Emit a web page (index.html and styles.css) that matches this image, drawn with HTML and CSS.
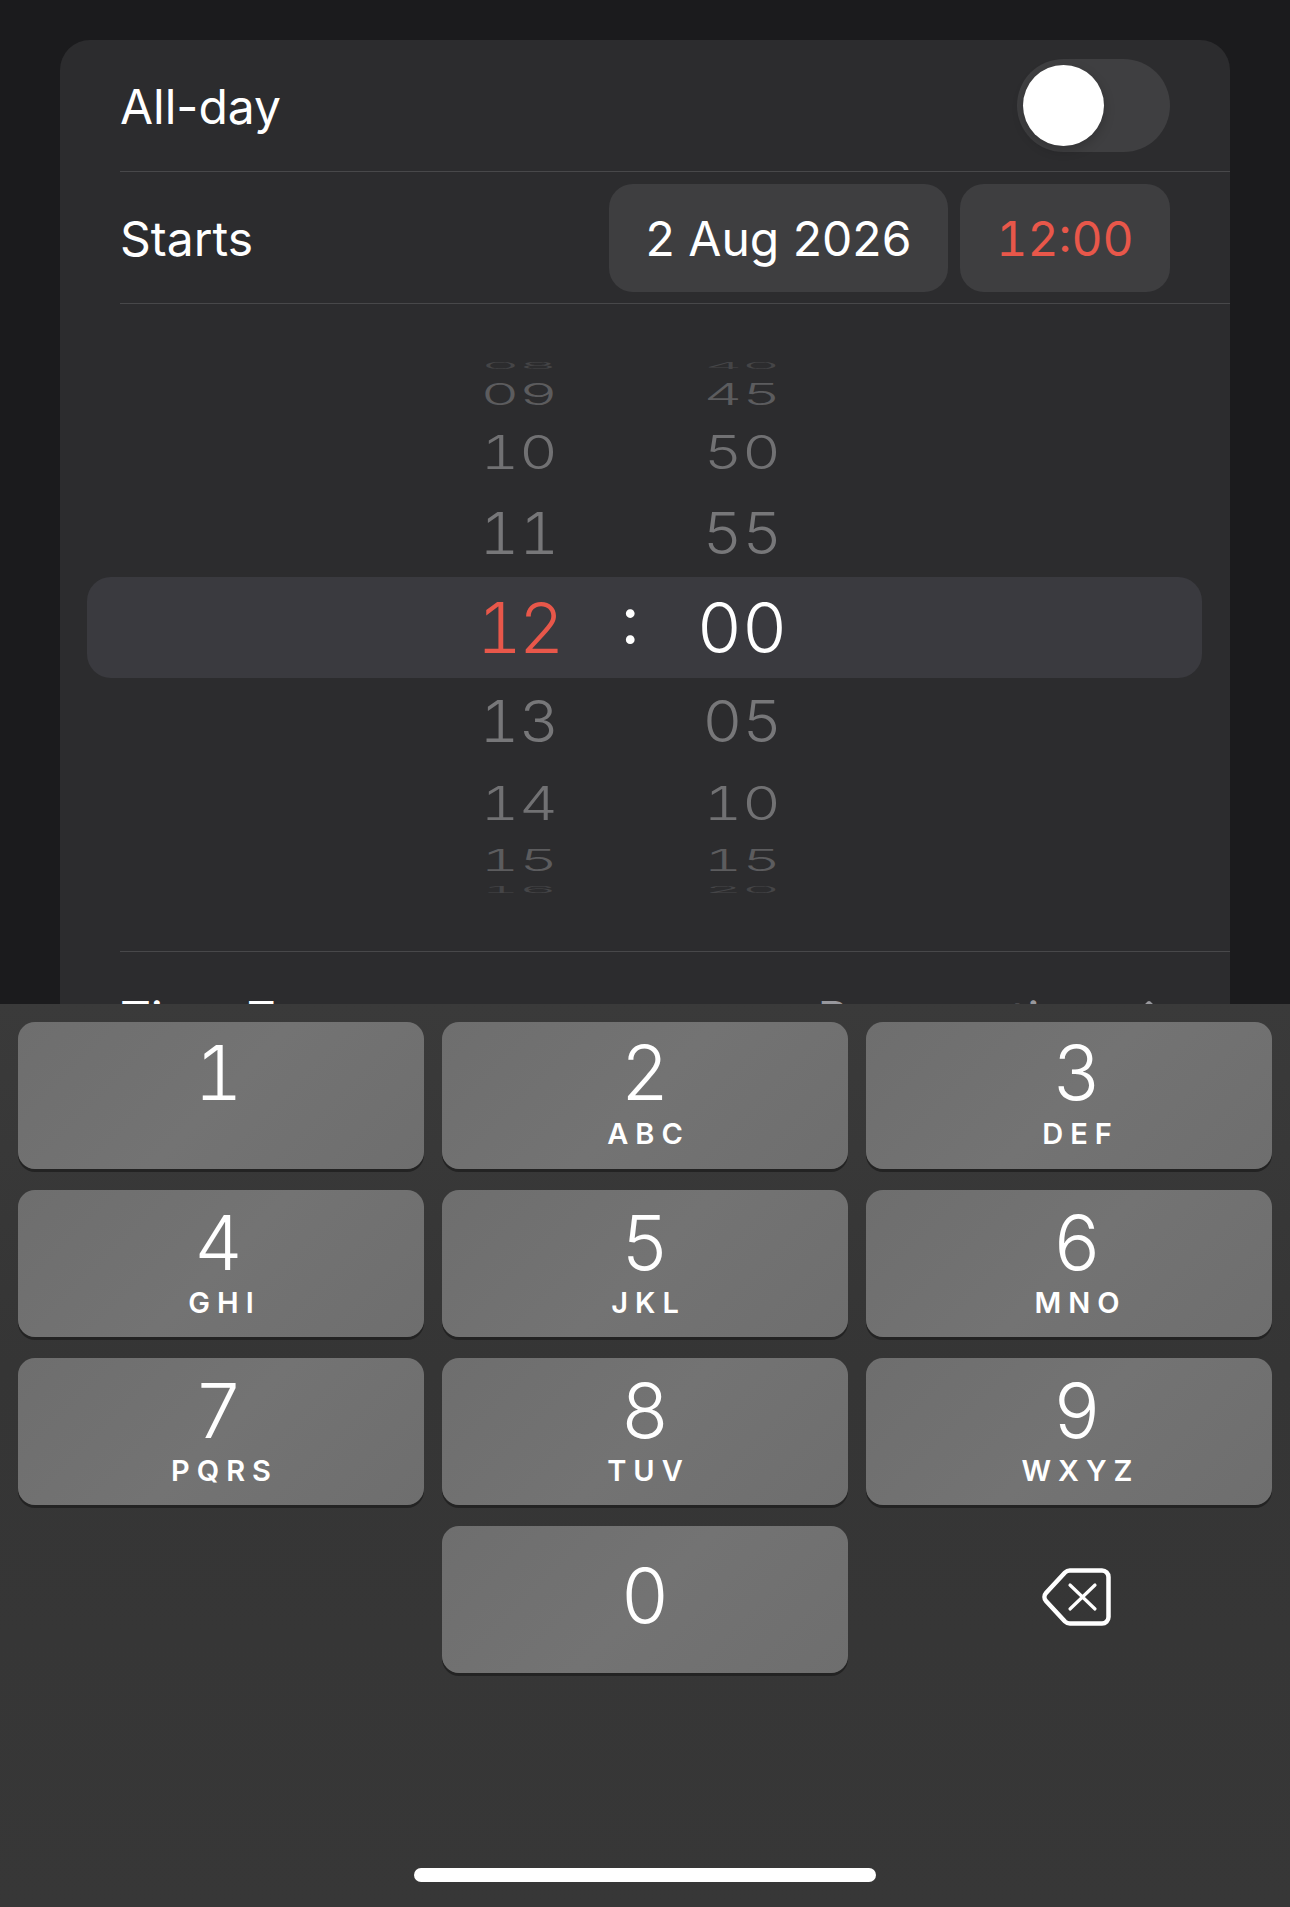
FILE: index.html
```html
<!DOCTYPE html>
<html lang="en">
<head>
    <meta charset="UTF-8" />
    <meta name="viewport" content="width=device-width, initial-scale=1.0" />
    <title>New Event</title>
    <link rel="stylesheet" href="styles.css">
</head>
<body>
    <div class="screen">
        <div class="card">
            <div class="row">
                <span>All-day</span>
                <div class="toggle"><div class="knob"></div></div>
            </div>
            <div class="row">
                <span>Starts</span>
                <div class="pills">
                    <div class="pill date">2 Aug 2026</div>
                    <div class="pill time">12:00</div>
                </div>
            </div>

            <div class="picker">
                <div class="band"></div>
                <div class="wheel">
                    <div class="column">
                        <div class="cell d4"><span>08</span></div>
                        <div class="cell d3"><span>09</span></div>
                        <div class="cell d2"><span>10</span></div>
                        <div class="cell d1"><span>11</span></div>
                        <div class="cell d0 red"><span>12</span></div>
                        <div class="cell d1"><span>13</span></div>
                        <div class="cell d2"><span>14</span></div>
                        <div class="cell d3"><span>15</span></div>
                        <div class="cell d4"><span>16</span></div>
                    </div>
                    <div class="colon">:</div>
                    <div class="column">
                        <div class="cell d4"><span>40</span></div>
                        <div class="cell d3"><span>45</span></div>
                        <div class="cell d2"><span>50</span></div>
                        <div class="cell d1"><span>55</span></div>
                        <div class="cell d0"><span>00</span></div>
                        <div class="cell d1"><span>05</span></div>
                        <div class="cell d2"><span>10</span></div>
                        <div class="cell d3"><span>15</span></div>
                        <div class="cell d4"><span>20</span></div>
                    </div>
                </div>
            </div>

            <div class="row">
                <span>Time Zone</span>
                <div class="zone">
                    <span>București</span>
                    <svg class="chevrons" viewBox="0 0 26 38" width="26" height="38">
                        <path d="M4 13 13 4l9 9M4 25l9 9 9-9" fill="none" stroke="#98989d" stroke-width="4" stroke-linecap="round" stroke-linejoin="round" />
                    </svg>
                </div>
            </div>
        </div>

        <div class="keyboard">
            <div class="keys">
                <div class="key"><div class="num">1</div></div>
                <div class="key"><div class="num">2</div><div class="letters">ABC</div></div>
                <div class="key"><div class="num">3</div><div class="letters">DEF</div></div>
                <div class="key"><div class="num">4</div><div class="letters">GHI</div></div>
                <div class="key"><div class="num">5</div><div class="letters">JKL</div></div>
                <div class="key"><div class="num">6</div><div class="letters">MNO</div></div>
                <div class="key"><div class="num">7</div><div class="letters">PQRS</div></div>
                <div class="key"><div class="num">8</div><div class="letters">TUV</div></div>
                <div class="key"><div class="num">9</div><div class="letters">WXYZ</div></div>
                <div class="blank"></div>
                <div class="key zero"><div class="num">0</div></div>
                <div class="backspace">
                    <svg viewBox="0 0 69 58" width="69" height="58">
                        <path d="M28 2.5H60a6.5 6.5 0 0 1 6.5 6.5v40a6.5 6.5 0 0 1-6.5 6.5H28a7 7 0 0 1-5-2L4 33a6 6 0 0 1 0-8L23 4.500a7 7 0 0 1 5-2z" fill="none" stroke="#fff" stroke-width="4.500" stroke-linejoin="round" />
                        <path d="M28 17 53 41M53 17 28 41" fill="none" stroke="#fff" stroke-width="3.200" stroke-linecap="round" />
                    </svg>
                </div>
            </div>
            <div class="home-bar"></div>
        </div>
    </div>
</body>
</html>
```
FILE: styles.css
```css
html, body {
    margin: 0;
    padding: 0;
    height: 100%;
}

body {
    font-family: Inter, "Liberation Sans", sans-serif;
    background-color: #1b1b1d;
    color: #fff;
    overflow: hidden;
}

.screen {
    position: relative;
    height: 100vh;
    padding-top: 40px;
    box-sizing: border-box;
    overflow: hidden;
}

.card {
    margin: 0 60px;
    background-color: #2c2c2e;
    border-radius: 30px;
    font-size: 48px;
    line-height: 48px;
}

.row {
    margin-left: 60px;
    padding-right: 60px;
    height: 131px;
    display: flex;
    justify-content: space-between;
    align-items: center;
    border-bottom: 1px solid #48484a;
}

.row > span {
    padding-top: 2px;
}

.toggle {
    width: 153px;
    height: 93px;
    padding: 6px;
    box-sizing: border-box;
    background-color: #3f3f41;
    border-radius: 47px;
}

.knob {
    width: 81px;
    height: 81px;
    background-color: #fff;
    border-radius: 50%;
    box-shadow: 0 4px 12px rgba(0, 0, 0, 0.2);
}

.pills {
    display: flex;
    gap: 12px;
}

.pill {
    height: 108px;
    padding-top: 2px;
    box-sizing: border-box;
    display: flex;
    align-items: center;
    justify-content: center;
    background-color: #3e3e40;
    border-radius: 24px;
}

.date {
    width: 339px;
}

.time {
    width: 210px;
    color: #e8574a;
    font-variant-numeric: tabular-nums;
}

.picker {
    position: relative;
    height: 647px;
    margin-left: 60px;
    border-bottom: 1px solid #48484a;
    display: flex;
    align-items: center;
}

.band {
    position: absolute;
    left: -33px;
    right: 28px;
    top: 273px;
    height: 101px;
    background-color: #3a3a3f;
    border-radius: 24px;
}

.wheel {
    position: relative;
    display: grid;
    grid-template-columns: 110px 110px 116px;
    padding-left: 344px;
    font-size: 70px;
    font-weight: 300;
    font-variant-numeric: tabular-nums;
}

.column {
    display: flex;
    flex-direction: column;
}

.cell {
    display: flex;
    align-items: center;
    justify-content: center;
}

.cell span {
    line-height: 1;
}

.d0 { height: 112px; }
.d1 { height: 76px; color: #777779; }
.d2 { height: 86px; color: #717173; }
.d3 { height: 30px; color: #5c5c5e; }
.d4 { height: 28px; color: #454547; }

/* numbers flatten and narrow as they roll away from the middle */
.d1 span { transform: scale(0.88, 0.82); }
.d2 span { transform: scale(0.85, 0.66); }
.d3 span { transform: scale(0.85, 0.42); }
.d4 span { transform: scale(0.83, 0.12); }

.red {
    color: #e8574a;
    letter-spacing: -3px;
}

.colon {
    align-self: center;
    text-align: center;
    font-size: 66px;
    font-weight: 400;
    transform: translate(1px, -8px);
}

.zone {
    display: flex;
    align-items: center;
    gap: 96px;
    color: #98989d;
    letter-spacing: 1px;
}

.zone span {
    padding-top: 2px;
}

.chevrons {
    margin-right: 8px;
}

.keyboard {
    position: absolute;
    left: 0;
    right: 0;
    top: 1004px;
    bottom: 0;
    padding: 18px 18px 25px;
    box-sizing: border-box;
    display: flex;
    flex-direction: column;
    background: linear-gradient(180deg, #3a3a3a 0%, #353535 40%, #373737 100%);
}

.keys {
    display: grid;
    grid-template-columns: repeat(3, 406px);
    grid-auto-rows: 147px;
    column-gap: 18px;
    row-gap: 21px;
}

.key {
    display: flex;
    flex-direction: column;
    align-items: center;
    padding-top: 25px;
    box-sizing: border-box;
    background: linear-gradient(135deg, #6e6e6e, #737373 50%, #6e6e6e);
    border-radius: 17px;
    box-shadow: 0 3px 0 #232323;
}

/* first row sits a little higher than the others */
.key:nth-child(-n+3) {
    padding-top: 23px;
}

.key:nth-child(-n+3) .letters {
    margin-top: 18px;
}

/* glyphs in the outer columns are off centre on the real keypad */
.key:nth-child(3n) {
    padding-left: 16px;
}

.key:nth-child(3n+1) .num {
    margin-right: 5px;
}

.key.zero {
    padding-top: 42px;
}

.num {
    font-size: 75px;
    font-weight: 300;
    line-height: 56px;
    font-variant-numeric: tabular-nums;
}

.letters {
    margin-top: 17px;
    font-size: 29px;
    font-weight: 600;
    line-height: 30px;
    letter-spacing: 7px;
    margin-right: -7px;
}

.backspace {
    display: flex;
    align-items: center;
    justify-content: center;
    padding: 0 0 5px 15px;
}

.home-bar {
    width: 462px;
    height: 14px;
    margin: auto auto 0;
    background-color: #fff;
    border-radius: 7px;
}
```
